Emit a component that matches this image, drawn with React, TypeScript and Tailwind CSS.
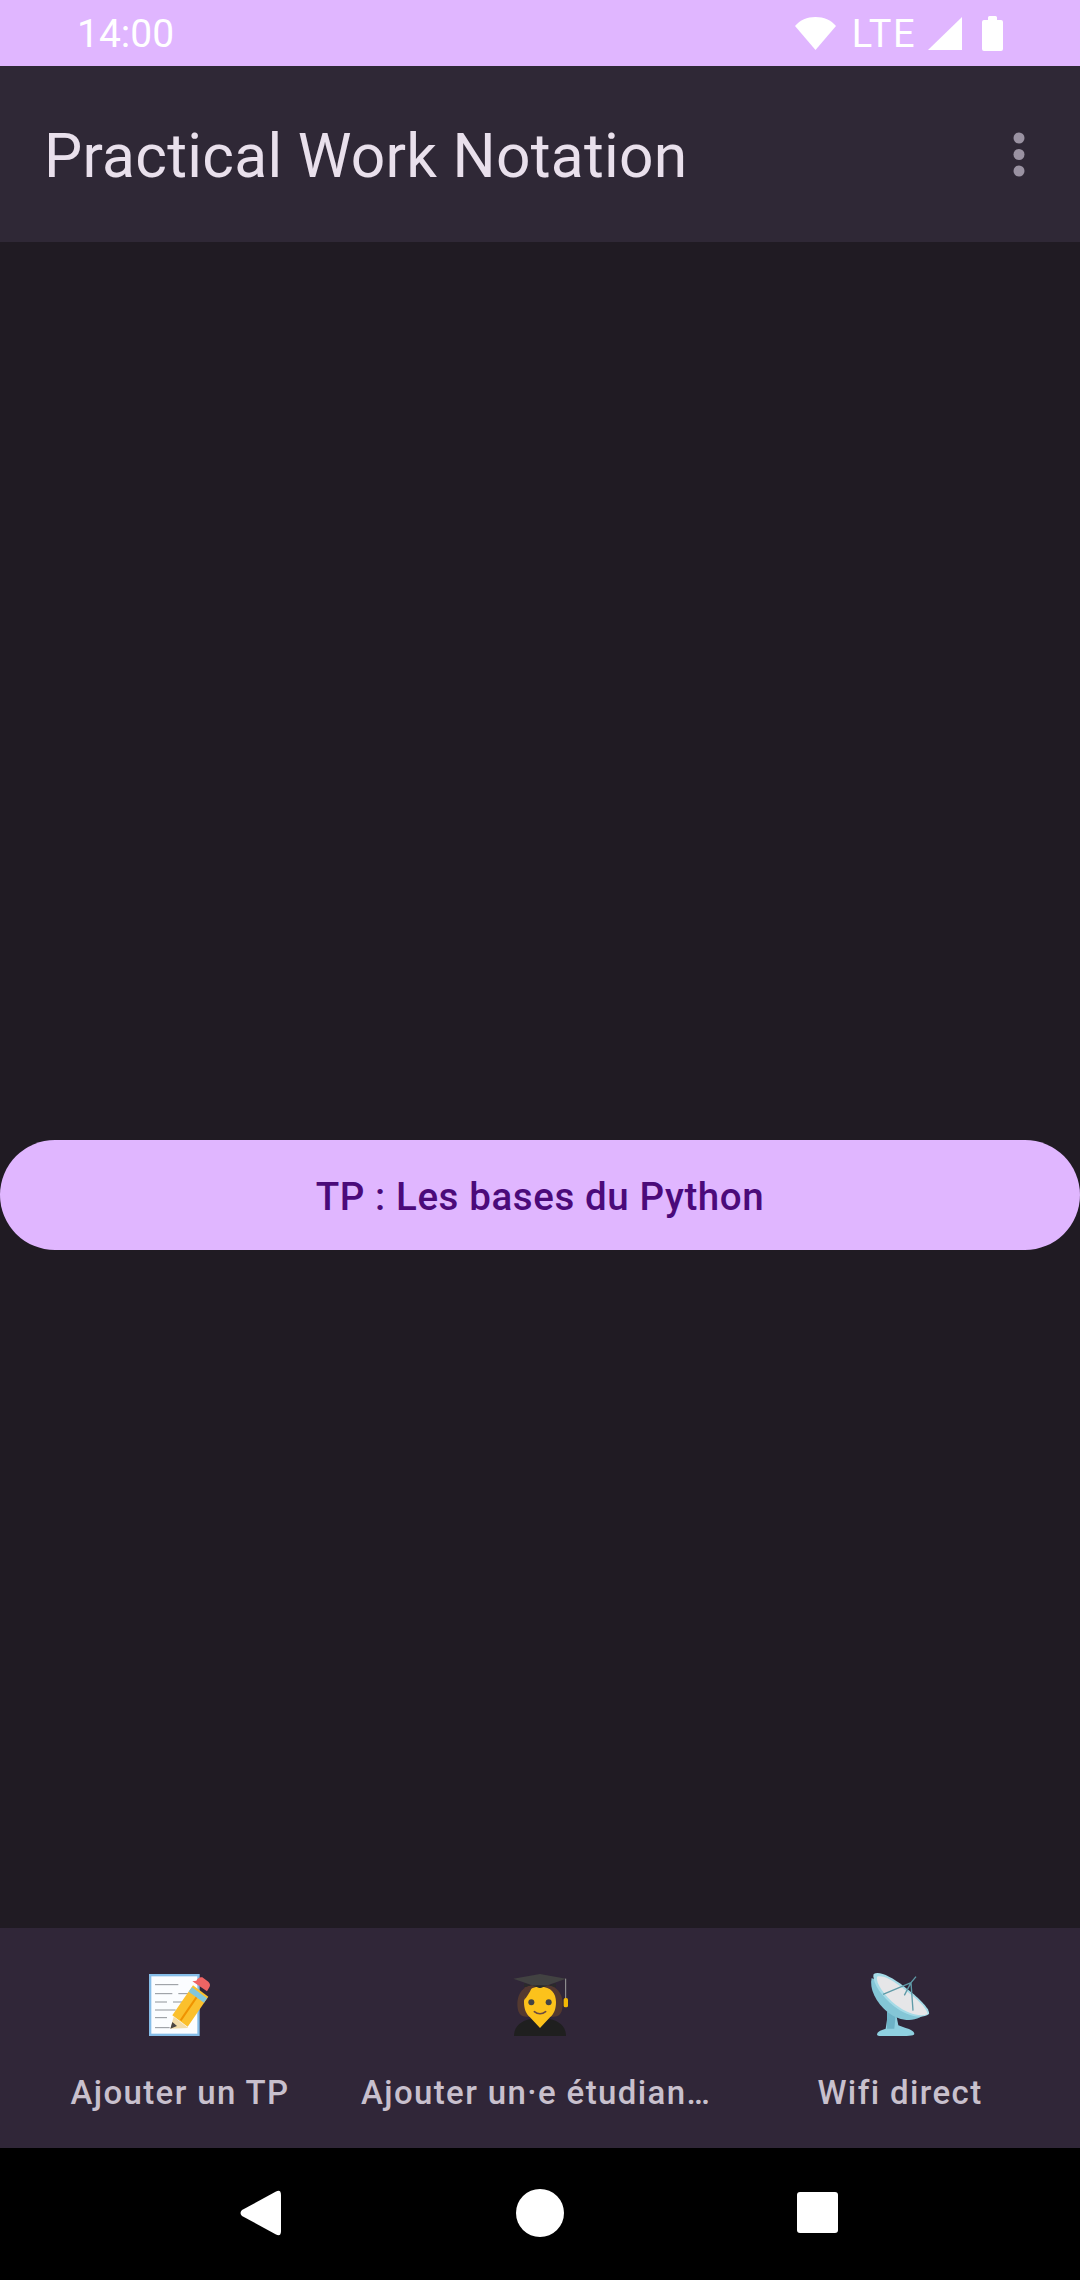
const roboto = "font-['Roboto',sans-serif]";

function MemoIcon() {
  return (
    <svg viewBox="82 66 198 198" className="h-[66px] w-[66px]">
      <rect x="88" y="72" width="152" height="186" fill="#85bde8" />
      <rect x="95" y="79" width="138" height="172" fill="#fbfdff" />
      <path
        d="M106 104h70M106 131h52M176 131h30M106 156h36M160 156h28M106 180h62M106 203h36M176 203h30M106 233h44"
        stroke="#8f9499"
        strokeWidth="3"
        fill="none"
      />
      <path d="M152 236l10-36 44 34z" fill="#f3dca8" />
      <path d="M152 236l6-20 14 12z" fill="#4b4542" />
      <path d="M158 196L220 106l46 34-62 90z" fill="#fbc02d" />
      <path d="M183 211l55-80" stroke="#f09300" strokeWidth="6" />
      <path d="M217 112l45 33-9 13-46-33z" fill="#82c6dc" />
      <path d="M230 92c4-8 10-12 18-10l18 13c6 6 6 12 3 17l-7 12-44-30z" fill="#ef6464" />
    </svg>
  );
}

function StudentIcon() {
  return (
    <svg viewBox="81 66 198 198" className="h-[66px] w-[66px]">
      <path d="M102 258c0-30 22-44 46-50h64c24 6 46 20 46 50z" fill="#1f1f1f" />
      <path d="M114 180c-8-38 8-78 66-80 58 2 74 42 66 80-3 13-12 20-24 20H138c-12 0-21-7-24-20z" fill="#543930" />
      <path d="M180 234l-30-32c-12-10-18-26-18-46 0-26 14-46 48-46s48 20 48 46c0 20-6 36-18 46z" fill="#fcc21b" />
      <path d="M132 150c8-8 16-20 24-38h-22z" fill="#543930" />
      <circle cx="154" cy="157" r="9" fill="#444" />
      <circle cx="206" cy="157" r="9" fill="#444" />
      <path d="M163 185c10 8 24 8 34 0" stroke="#6d4c41" strokeWidth="5" fill="none" strokeLinecap="round" />
      <path d="M100 86l80-14 78 14-78 28z" fill="#424242" />
      <path d="M132 100v12c18-8 78-8 96 0v-12l-48 14z" fill="#2b2b2b" />
      <path d="M257 86v60" stroke="#9e9e9e" strokeWidth="3" />
      <rect x="251" y="144" width="13" height="28" rx="5" fill="#f2b705" />
    </svg>
  );
}

function SatelliteIcon() {
  return (
    <svg viewBox="82 66 198 198" className="h-[66px] w-[66px]">
      <path d="M112 254c0-10 14-14 26-18l8-54 24 14 6 30 22 8c14 4 26 10 26 18-2 6-20 6-56 6s-54 2-56-4z" fill="#8fd0e0" />
      <path d="M142 184l26 12-4 40h-22z" fill="#6db3c7" />
      <path d="M96 84c-8 30 12 74 50 104 34 26 92 36 120-10z" fill="#84c6d6" />
      <path d="M102 72c16-10 50 6 92 38 42 32 78 66 74 82-24 18-70 4-106-24-40-32-66-74-60-96z" fill="#a5dbe7" />
      <path d="M112 80c16-6 44 8 80 36 36 28 70 56 72 76-22 10-62-2-96-28-34-28-60-64-56-84z" fill="#e6e6e8" />
      <path d="M130 133l86-36M194 136l20-38M214 98l15-18M214 98l6 84" stroke="#5f9ba8" strokeWidth="4" fill="none" />
    </svg>
  );
}

function NavItem({ icon, label }: { icon: React.ReactNode; label: string }) {
  return (
    <div className="flex min-w-0 flex-col items-center">
      <div className="flex h-[66px] items-center justify-center">{icon}</div>
      <div className="mt-[33px] w-full truncate px-px text-center text-[33px] leading-[44px] font-medium tracking-[1.375px] text-[#c8c0cd]">
        {label}
      </div>
    </div>
  );
}

export default function App() {
  return (
    <div className={`flex h-[2280px] w-[1080px] flex-col overflow-hidden bg-[#201b23] ${roboto}`}>
      <div className="flex h-[66px] shrink-0 items-center justify-between bg-[#e0b6ff] pr-[77px] pl-[77px]">
        <span className="pt-[2px] text-[39px] leading-[66px] text-white">14:00</span>
        <div className="flex items-center">
          <svg viewBox="0 0 41 33" className="h-[33px] w-[41px]">
            <path d="M0 9C5 3 12 0 20.5 0S36 3 41 9L20.5 33z" fill="#fff" />
          </svg>
          <span className="ml-[16px] pt-[2px] text-[38px] leading-[44px] tracking-[1.5px] text-white">LTE</span>
          <svg viewBox="0 0 34 33" className="ml-[12px] h-[33px] w-[34px]">
            <path d="M0 33L34 0v33z" fill="#fff" />
          </svg>
          <svg viewBox="0 0 21 35" className="ml-[20px] h-[35px] w-[21px]">
            <path d="M6 4V1.5Q6 0 7.5 0h6Q15 0 15 1.5V4h4q2 0 2 2v27q0 2-2 2H2q-2 0-2-2V6q0-2 2-2z" fill="#fff" />
          </svg>
        </div>
      </div>

      <div className="flex h-[176px] shrink-0 items-center justify-between bg-[#2f2836] pr-[55px] pl-[44px]">
        <span className="pt-[6px] text-[60.5px] leading-[80px] tracking-[0.28px] text-[#e9e0ec]">Practical Work Notation</span>
        <svg viewBox="0 0 12 45" className="h-[45px] w-[12px]">
          <circle cx="6" cy="6" r="5.5" fill="#9a92a2" />
          <circle cx="6" cy="22.5" r="5.5" fill="#9a92a2" />
          <circle cx="6" cy="39" r="5.5" fill="#9a92a2" />
        </svg>
      </div>

      <div className="flex-1 pt-[898px]">
        <div className="flex h-[110px] items-center justify-center rounded-full bg-[#e0b6ff] pt-[3px] text-[38.5px] font-medium tracking-[0.6px] text-[#4b0a7a]">
          TP : Les bases du Python
        </div>
      </div>

      <div className="grid h-[220px] shrink-0 grid-cols-3 bg-[#302638] pt-[44px]">
        <NavItem icon={<MemoIcon />} label="Ajouter un TP" />
        <NavItem icon={<StudentIcon />} label="Ajouter un·e étudiant·e" />
        <NavItem icon={<SatelliteIcon />} label="Wifi direct" />
      </div>

      <div className="flex h-[132px] shrink-0 items-center justify-center bg-black pb-[3px] pr-[2px]">
        <svg viewBox="0 0 42 46" className="h-[46px] w-[42px]">
          <path d="M2 20L36 1.5Q41 -1 41 5V41Q41 47 36 44.5L2 26Q-1 23 2 20z" fill="#fff" />
        </svg>
        <div className="ml-[234px] h-[48px] w-[48px] rounded-full bg-white" />
        <div className="ml-[233px] h-[41px] w-[41px] rounded-[3px] bg-white" />
      </div>
    </div>
  );
}
